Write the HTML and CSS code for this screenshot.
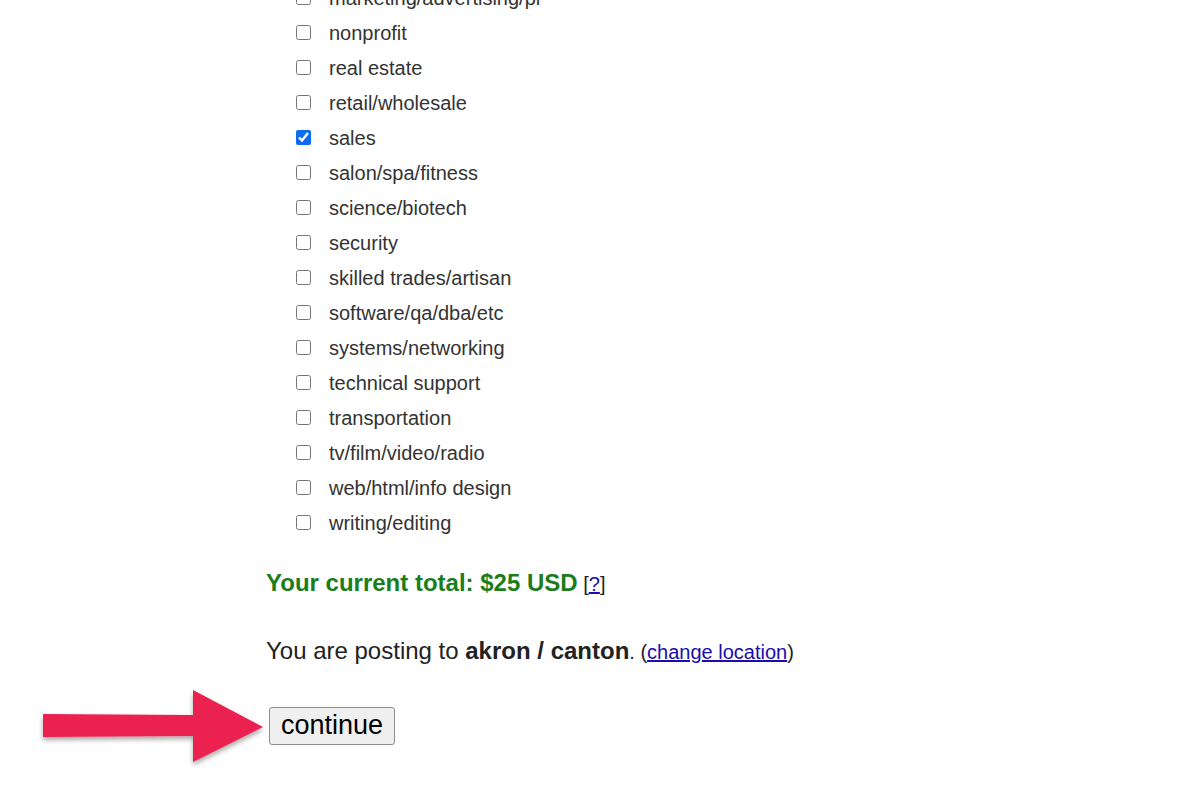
FILE: index.html
```html
<!DOCTYPE html>
<html lang="en">
<head>
  <meta charset="UTF-8" />
  <title>choose category</title>
  <link rel="stylesheet" href="styles.css">
</head>
<body>
  <form class="page">
    <ul class="cats">
      <li><input type="checkbox" id="c1"><label for="c1">marketing/advertising/pr</label></li>
      <li><input type="checkbox" id="c2"><label for="c2">nonprofit</label></li>
      <li><input type="checkbox" id="c3"><label for="c3">real estate</label></li>
      <li><input type="checkbox" id="c4"><label for="c4">retail/wholesale</label></li>
      <li><input type="checkbox" id="c5" checked><label for="c5">sales</label></li>
      <li><input type="checkbox" id="c6"><label for="c6">salon/spa/fitness</label></li>
      <li><input type="checkbox" id="c7"><label for="c7">science/biotech</label></li>
      <li><input type="checkbox" id="c8"><label for="c8">security</label></li>
      <li><input type="checkbox" id="c9"><label for="c9">skilled trades/artisan</label></li>
      <li><input type="checkbox" id="c10"><label for="c10">software/qa/dba/etc</label></li>
      <li><input type="checkbox" id="c11"><label for="c11">systems/networking</label></li>
      <li><input type="checkbox" id="c12"><label for="c12">technical support</label></li>
      <li><input type="checkbox" id="c13"><label for="c13">transportation</label></li>
      <li><input type="checkbox" id="c14"><label for="c14">tv/film/video/radio</label></li>
      <li><input type="checkbox" id="c15"><label for="c15">web/html/info design</label></li>
      <li><input type="checkbox" id="c16"><label for="c16">writing/editing</label></li>
    </ul>

    <p class="total"><b>Your current total: $25 USD</b> <span class="small">[<a href="#">?</a>]</span></p>

    <p class="where">You are posting to <b>akron / canton</b><span class="small">. (<a href="#">change location</a>)</span></p>

    <div class="go">
      <button type="button">continue</button>
      <svg class="arrow" width="240" height="100" viewBox="0 0 240 100">
        <defs>
          <filter id="sh" x="-10%" y="-20%" width="130%" height="150%">
            <feDropShadow dx="0" dy="3" stdDeviation="2.5" flood-color="#000" flood-opacity="0.35"/>
          </filter>
        </defs>
        <polygon filter="url(#sh)" fill="#eb2150"
          points="3,26 153,27 153,2 223,39 153,74 153,48 3,49"/>
      </svg>
    </div>
  </form>
</body>
</html>
```

FILE: styles.css
```css
body {
  margin: 0;
  background: #fff;
  color: #222;
  font-family: "Liberation Sans", Arial, sans-serif;
  font-size: 20px;
}

.page {
  margin: -20px 0 0 266px;
  padding-bottom: 50px;
}

.cats {
  list-style: none;
  margin: 0;
  padding: 0 0 0 30px;
}

.cats li {
  display: flex;
  align-items: center;
  height: 35px;
}

.cats input {
  width: 15px;
  height: 15px;
  margin: 0 18px 0 0;
  accent-color: #0b6cf0;
}

.cats label {
  color: #333;
  position: relative;
  top: 1px;
}

.total {
  margin: 29px 0 0;
  line-height: 28px;
}

.total b {
  color: #1a7d1a;
  font-size: 24px;
}

.small {
  font-size: 20px;
}

a {
  color: #1a0dab;
}

.where {
  margin: 39px 0 0;
  font-size: 24px;
  line-height: 28px;
}

.go {
  position: relative;
  margin-top: 41px;
}

.go button {
  font-family: "Liberation Sans", Arial, sans-serif;
  font-size: 27px;
  color: #000;
  background: #efefef;
  border: 1px solid #8f8f8f;
  border-radius: 3px;
  padding: 2px 11px 3px;
  margin-left: 3px;
}

.arrow {
  position: absolute;
  left: -226px;
  top: -19px;
  overflow: visible;
}
```
